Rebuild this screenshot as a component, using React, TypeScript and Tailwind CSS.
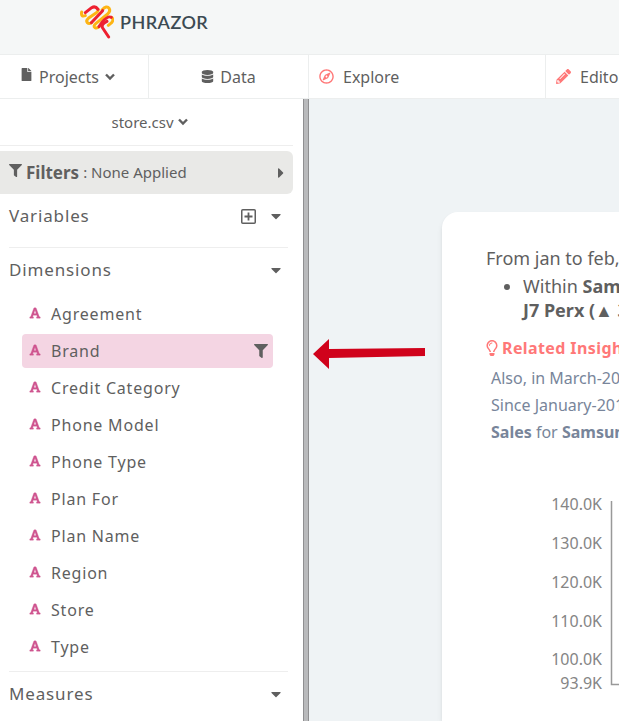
import type { ReactNode } from "react";
import {
  FaCaretDown,
  FaCaretRight,
  FaDatabase,
  FaFile,
  FaFilter,
  FaFont,
  FaPencilAlt,
  FaRegCompass,
  FaRegLightbulb,
} from "react-icons/fa";

const dimensions = [
  "Agreement",
  "Brand",
  "Credit Category",
  "Phone Model",
  "Phone Type",
  "Plan For",
  "Plan Name",
  "Region",
  "Store",
  "Type",
];

const ticks = [
  { label: "140.0K", y: 14 },
  { label: "130.0K", y: 53 },
  { label: "120.0K", y: 92 },
  { label: "110.0K", y: 131 },
  { label: "100.0K", y: 169 },
  { label: "93.9K", y: 193 },
];

function Logo() {
  return (
    <svg width="34" height="34" viewBox="0 0 102 102" fill="none" strokeWidth="9" strokeLinecap="round" strokeLinejoin="round">
      <path d="M5 21Q2 37 16 32" stroke="#fdb515" />
      <path d="M54 13Q56 18 48 24L25 40Q17 47 22 53Q27 58 34 53" stroke="#fdb515" />
      <path d="M66 15Q80 -1 88 11Q92 18 83 27L48 55Q38 64 45 68Q51 71 57 65" stroke="#fdb515" />
      <path d="M94 37Q103 42 95 53L85 61" stroke="#fdb515" />
      <path d="M16 23L35 8Q46 1 54 13" stroke="#ee2030" />
      <path d="M34 53L68 17" stroke="#ee2030" />
      <path d="M57 65L66 52Q84 31 94 37" stroke="#ee2030" />
      <path d="M81 49Q62 57 68 69L86 96" stroke="#ee2030" />
    </svg>
  );
}

function ChevronDown() {
  return (
    <svg width="10" height="8" viewBox="0 0 10 8" fill="none" stroke="currentColor" strokeWidth="2.4">
      <path d="M1 1.5l4 4 4-4" />
    </svg>
  );
}

function PlusBox() {
  return (
    <svg width="15" height="15" viewBox="0 0 15 15" fill="none" stroke="currentColor">
      <rect x="0.75" y="0.75" width="13.5" height="13.5" rx="1" strokeWidth="1.5" />
      <path d="M7.5 3.5v8M3.5 7.5h8" strokeWidth="1.8" />
    </svg>
  );
}

function SectionHeader({ title, children }: { title: string; children?: ReactNode }) {
  return (
    <div className="flex items-center h-11 pr-1 text-[17px] tracking-wider">
      <h2 className="flex-1">{title}</h2>
      {children}
      <button aria-label={`Toggle ${title}`} className="ml-3 w-4 flex justify-center">
        <FaCaretDown size={16} />
      </button>
    </div>
  );
}

function Sidebar() {
  return (
    <aside className="w-[303px] shrink-0 bg-white">
      <div className="mr-[10px]">
        <button className="w-full h-[47px] pl-[6px] flex items-center justify-center gap-1 text-[15px] border-b border-[#eeeeee]">
          store.csv
          <ChevronDown />
        </button>
        <button className="mt-[5px] w-full h-[43px] pl-[9px] pr-1 flex items-center rounded-r-md bg-[#e9e9e7] text-[15px]">
          <FaFilter size={13} className="mb-1 mr-1" />
          <span className="text-[17px] font-bold mr-1">Filters</span>
          <span className="flex-1 text-left">: None Applied</span>
          <FaCaretRight size={16} />
        </button>
      </div>

      <div className="ml-[9px] mr-[15px]">
        <div className="h-[54px] border-b border-[#eeeeee]">
          <SectionHeader title="Variables">
            <button aria-label="Add variable">
              <PlusBox />
            </button>
          </SectionHeader>
        </div>
        <SectionHeader title="Dimensions" />
        <ul className="pt-[5px] pb-1 border-b border-[#eeeeee]">
          {dimensions.map((name) => (
            <li key={name} className="h-[37px]">
              <button
                className={`ml-[13px] w-[251px] h-[34px] pl-[7px] pr-[5px] flex items-center rounded ${
                  name === "Brand" ? "bg-[#f4d5e3]" : ""
                }`}
              >
                <FaFont size={12} className="text-[#cf5590] mb-[2px]" strokeWidth="12" />
                <span className="ml-[10px] flex-1 text-left tracking-wider">{name}</span>
                {name === "Brand" && <FaFilter size={14} />}
              </button>
            </li>
          ))}
        </ul>
        <SectionHeader title="Measures" />
      </div>
    </aside>
  );
}

function Insights() {
  return (
    <section className="flex-1 ml-[133px] mt-[113px] pl-11 pt-8 bg-white rounded-tl-2xl shadow-md whitespace-nowrap overflow-hidden">
      <p className="text-lg leading-7">From jan to feb,</p>
      <ul className="list-disc pl-[37px] text-lg leading-6 pt-[2px]">
        <li>
          Within <b>Samsung</b>
          <br />
          <b>J7 Perx (▲ 3</b>
        </li>
      </ul>
      <h3 className="mt-[14px] h-6 flex items-center gap-1 text-base font-bold tracking-wide text-[#ff7878]">
        <FaRegLightbulb size={16} className="w-3 shrink-0" />
        Related Insights
      </h3>
      <div className="mt-[5px] pl-[5px] text-base leading-[27px] text-[#78859a]">
        <p>Also, in March-2018</p>
        <p>Since January-2018</p>
        <p>
          <b>Sales</b> for <b>Samsung</b>
        </p>
      </div>
      <svg width="400" height="220" className="mt-11 text-base" fill="#858585">
        {ticks.map((t) => (
          <text key={t.label} x="116" y={t.y + 6} textAnchor="end">
            {t.label}
          </text>
        ))}
        <path d="M125.5 11V194.5H400" fill="none" stroke="#999999" strokeWidth="1.5" />
      </svg>
    </section>
  );
}

export default function App() {
  return (
    <div className="h-screen flex flex-col overflow-hidden bg-[#eff3f5] text-[#5f5f5f] font-['Noto_Sans',sans-serif]">
      <header className="h-[54px] shrink-0 pl-20 pb-[10px] flex items-center gap-[6px] bg-[#f5f7f7]">
        <Logo />
        <span className="text-lg font-semibold tracking-wide text-[#3c4a52] font-['Lato',sans-serif]">PHRAZOR</span>
      </header>

      <nav className="h-[45px] shrink-0 flex bg-white border-y border-[#eceeee] text-base">
        <a href="#projects" className="w-[149px] shrink-0 pl-5 flex items-center gap-[6px] border-r border-[#eceeee]">
          <FaFile size={13} className="mb-1" />
          Projects
          <ChevronDown />
        </a>
        <a href="#data" className="w-40 shrink-0 flex items-center justify-center gap-[6px] border-r border-[#eceeee]">
          <FaDatabase size={13} />
          Data
        </a>
        <a href="#explore" className="w-[237px] shrink-0 pl-[10px] flex items-center gap-[9px] border-r border-[#eceeee]">
          <FaRegCompass size={15} className="text-[#ff7878]" />
          Explore
        </a>
        <a href="#editor" className="pl-[10px] flex items-center gap-[9px] whitespace-nowrap">
          <FaPencilAlt size={15} className="text-[#ff7878]" />
          Editor
        </a>
      </nav>

      <div className="flex-1 min-h-0 flex">
        <Sidebar />
        <div className="w-[6px] shrink-0 bg-[#b9babc] border-x border-[#8f8f91]" />
        <main className="relative flex-1 min-w-0 flex">
          <svg width="114" height="32" viewBox="0 0 114 32" className="absolute left-[3px] top-60">
            <path d="M1 15L17 0V10L113 9V17L17 19V30z" fill="#d0021b" />
          </svg>
          <Insights />
        </main>
      </div>
    </div>
  );
}
